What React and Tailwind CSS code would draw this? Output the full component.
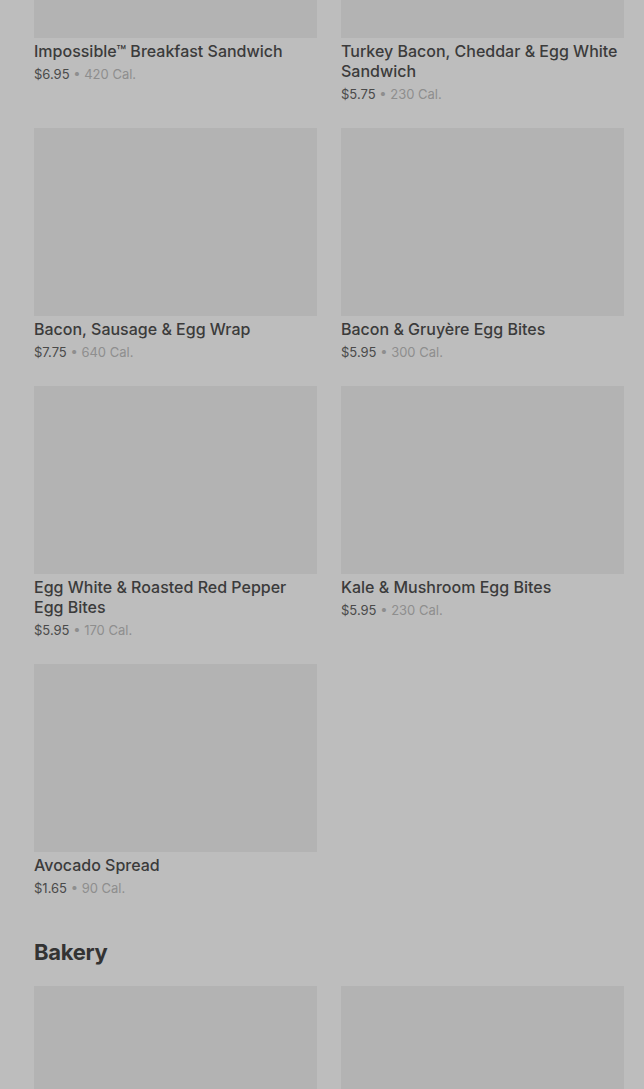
import React from "react";

const breakfast = [
  { name: "Impossible™ Breakfast Sandwich", price: "$6.95", cal: "420 Cal." },
  { name: "Turkey Bacon, Cheddar & Egg White Sandwich", price: "$5.75", cal: "230 Cal." },
  { name: "Bacon, Sausage & Egg Wrap", price: "$7.75", cal: "640 Cal." },
  { name: "Bacon & Gruyère Egg Bites", price: "$5.95", cal: "300 Cal." },
  { name: "Egg White & Roasted Red Pepper Egg Bites", price: "$5.95", cal: "170 Cal." },
  { name: "Kale & Mushroom Egg Bites", price: "$5.95", cal: "230 Cal." },
  { name: "Avocado Spread", price: "$1.65", cal: "90 Cal." },
];

const bakery = [{ name: "Butter Croissant" }, { name: "Chocolate Croissant" }];

const ItemCard = ({ item }) => (
  <div className="flex flex-col">
    <div className="h-[188px] w-full bg-[#b3b3b3]" />
    <p className="mt-[3px] text-[16px] font-medium leading-5 text-[#3b3b3b]">
      {item.name}
    </p>
    <p className="mt-[3px] text-[13px] leading-[20px] text-[#4a4a4a]">
      {item.price}
      <span className="text-[#8e8e8e]"> • {item.cal}</span>
    </p>
  </div>
);

const App = () => {
  return (
    <div
      className="h-[1089px] overflow-hidden bg-[#bdbdbd]"
      style={{ fontFamily: "Inter, 'Noto Sans', sans-serif" }}
    >
      <div className="mt-[-150px] ml-[34px] mr-[20px]">
        <div className="grid grid-cols-2 gap-x-6 gap-y-[24px]">
          {breakfast.map((item) => (
            <ItemCard key={item.name} item={item} />
          ))}
        </div>
        <h2 className="mt-[38px] text-[22px] font-bold leading-8 tracking-[-0.3px] text-[#333333]">
          Bakery
        </h2>
        <div className="mt-[18px] grid grid-cols-2 gap-x-6">
          {bakery.map((item) => (
            <div key={item.name} className="h-[188px] bg-[#b3b3b3]" />
          ))}
        </div>
      </div>
    </div>
  );
};

export default App;
